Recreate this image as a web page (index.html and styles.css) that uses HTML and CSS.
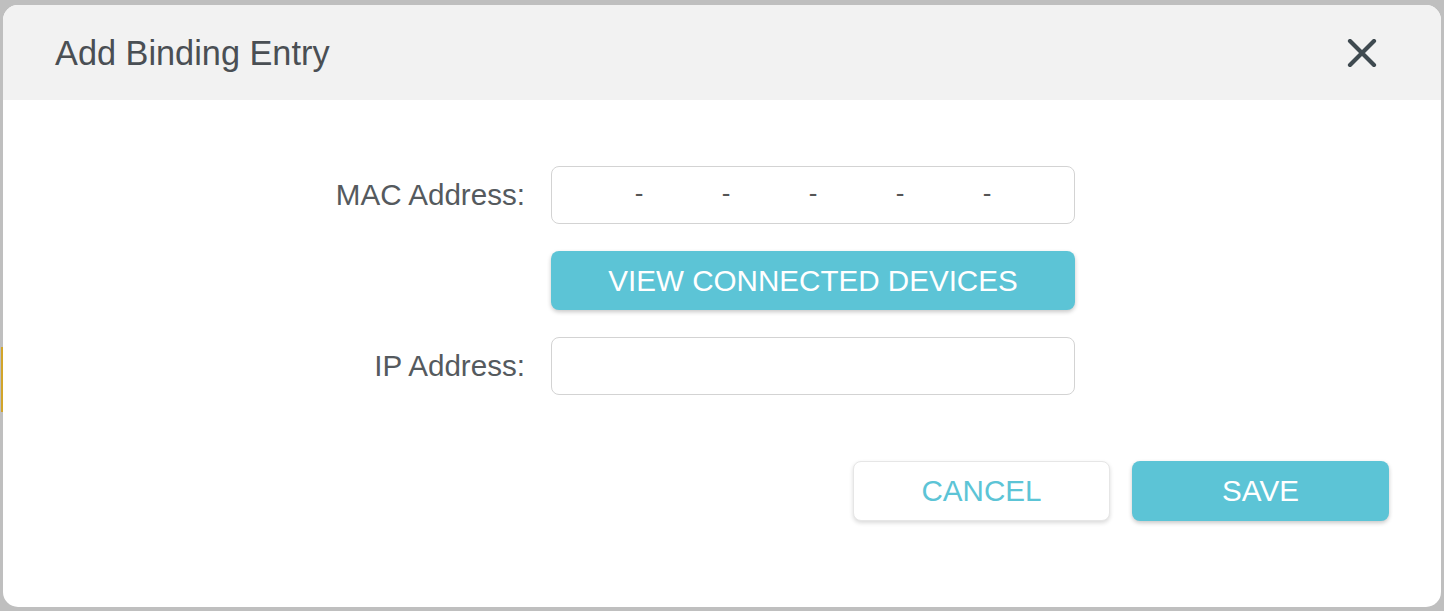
FILE: index.html
```html
<!DOCTYPE html>
<html lang="en">
<head>
<meta charset="utf-8">
<title>Add Binding Entry</title>
<link rel="stylesheet" href="styles.css">
</head>
<body>
<div class="edge-mark"></div>
<div class="dialog">
  <div class="dialog-header">
    <h1 class="dialog-title">Add Binding Entry</h1>
    <button class="close-btn" aria-label="Close">
      <svg width="30" height="28" viewBox="0 0 30 28"><path d="M3 2 L27 26 M27 2 L3 26" stroke="#3f4a50" stroke-width="4.2" stroke-linecap="round" fill="none"/></svg>
    </button>
  </div>
  <div class="dialog-body">
    <div class="form">
      <label class="form-label">MAC Address:</label>
      <div class="field mac-field">
        <span class="seg"></span><span class="sep">-</span>
        <span class="seg"></span><span class="sep">-</span>
        <span class="seg"></span><span class="sep">-</span>
        <span class="seg"></span><span class="sep">-</span>
        <span class="seg"></span><span class="sep">-</span>
        <span class="seg"></span>
      </div>
      <span class="form-label"></span>
      <button class="btn btn-primary">VIEW CONNECTED DEVICES</button>
      <label class="form-label">IP Address:</label>
      <div class="field"></div>
    </div>
    <div class="footer">
      <button class="btn btn-secondary">CANCEL</button>
      <button class="btn btn-primary">SAVE</button>
    </div>
  </div>
</div>
</body>
</html>
```
FILE: styles.css
```css
html, body {
  margin: 0;
  padding: 0;
}
body {
  background: #bfbfbf;
  width: 1444px;
  height: 611px;
  padding: 5px 3px 4px 3px;
  box-sizing: border-box;
  font-family: "Liberation Sans", Arial, sans-serif;
  position: relative;
}
.edge-mark {
  position: absolute;
  left: 1px;
  top: 347px;
  width: 2px;
  height: 65px;
  background: #d2a52a;
}
.dialog {
  height: 602px;
  background: #ffffff;
  border-radius: 15px;
  overflow: hidden;
  display: flex;
  flex-direction: column;
}
.dialog-header {
  height: 95px;
  flex: none;
  background: #f2f2f2;
  display: flex;
  align-items: center;
  justify-content: space-between;
  padding: 0 64px 0 52px;
}
.dialog-title {
  margin: 0;
  font-weight: normal;
  font-size: 34.3px;
  color: #4a4f54;
  position: relative;
  top: 1px;
}
.close-btn {
  border: 0;
  background: none;
  padding: 0;
  width: 30px;
  height: 28px;
  display: flex;
  cursor: pointer;
}
.dialog-body {
  flex: 1;
  padding-top: 66px;
  display: flex;
  flex-direction: column;
}
.form {
  display: grid;
  grid-template-columns: 522px 524px;
  column-gap: 26px;
  row-gap: 27px;
  align-items: center;
}
.form-label {
  text-align: right;
  font-size: 29.6px;
  color: #555a5e;
}
.field {
  height: 58px;
  box-sizing: border-box;
  border: 1px solid #d3d3d3;
  border-radius: 8px;
  background: #fff;
}
.mac-field {
  display: flex;
  align-items: center;
  font-size: 26px;
  color: #555;
}
.seg {
  flex: 1;
}
.sep {
  width: 10px;
  margin: 0 -5px;
  text-align: center;
  position: relative;
  top: -2px;
}
.btn {
  border: 0;
  font-family: "Liberation Sans", Arial, sans-serif;
  font-size: 29.6px;
  border-radius: 8px;
  height: 59px;
  padding: 0;
  cursor: pointer;
}
.btn-primary {
  background: #5cc4d6;
  color: #ffffff;
  box-shadow: 0 2px 4px rgba(0, 0, 0, 0.22);
}
.btn-secondary {
  background: #ffffff;
  color: #5cc4d6;
  border: 1px solid #e6e6e6;
  box-shadow: 0 2px 4px rgba(0, 0, 0, 0.15);
}
.footer {
  margin-top: 66px;
  display: flex;
  justify-content: flex-end;
  gap: 22px;
  padding-right: 52px;
}
.footer .btn {
  width: 257px;
  height: 60px;
}
```
